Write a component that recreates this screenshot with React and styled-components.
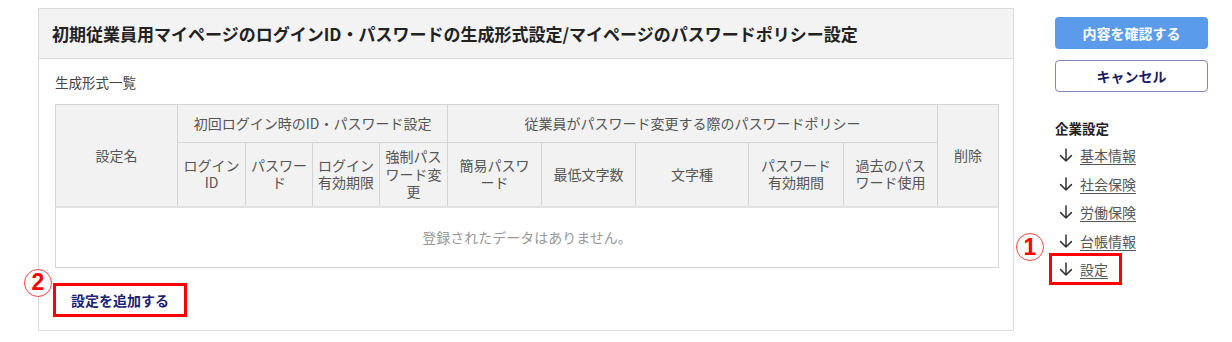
import styled, { createGlobalStyle } from "styled-components";

const GlobalStyle = createGlobalStyle`
  html, body {
    margin: 0;
    padding: 0;
    background: #fff;
  }
  body {
    font-family: "Noto Sans CJK JP", "Noto Sans", sans-serif;
    color: #333;
  }
`;

const policyCols = [
  { label: "簡易パスワード", width: 94 },
  { label: "最低文字数", width: 94 },
  { label: "文字種", width: 113 },
  { label: "パスワード\n有効期間", width: 95 },
  { label: "過去のパスワード使用", width: 94 },
];

const loginCols = [
  { label: "ログインID", width: 68 },
  { label: "パスワード", width: 67 },
  { label: "ログイン有効期限", width: 67 },
  { label: "強制パスワード変更", width: 68 },
];

const navLinks = ["基本情報", "社会保険", "労働保険", "台帳情報", "設定"];

export default function App() {
  return (
    <>
      <GlobalStyle />
      <Page>
        <Panel>
          <PanelHeader>
            <Title>
              初期従業員用マイページのログインID・パスワードの生成形式設定/マイページのパスワードポリシー設定
            </Title>
          </PanelHeader>
          <PanelBody>
            <SectionLabel>生成形式一覧</SectionLabel>
            <Table>
              <colgroup>
                <col style={{ width: 122 }} />
                {loginCols.map((c) => (
                  <col key={c.label} style={{ width: c.width }} />
                ))}
                {policyCols.map((c) => (
                  <col key={c.label} style={{ width: c.width }} />
                ))}
                <col style={{ width: 61 }} />
              </colgroup>
              <thead>
                <GroupRow>
                  <Th rowSpan={2}>設定名</Th>
                  <Th colSpan={4}>初回ログイン時のID・パスワード設定</Th>
                  <Th colSpan={5}>従業員がパスワード変更する際のパスワードポリシー</Th>
                  <Th rowSpan={2}>削除</Th>
                </GroupRow>
                <SubRow>
                  {loginCols.map((c) => (
                    <Th key={c.label}>{c.label}</Th>
                  ))}
                  {policyCols.map((c) => (
                    <Th key={c.label}>{c.label}</Th>
                  ))}
                </SubRow>
              </thead>
              <tbody>
                <tr>
                  <EmptyCell colSpan={11}>登録されたデータはありません。</EmptyCell>
                </tr>
              </tbody>
            </Table>
            <AddButton>
              <Marker $top={-17} $left={-32}>2</Marker>
              設定を追加する
            </AddButton>
          </PanelBody>
        </Panel>

        <Sidebar>
          <PrimaryButton>内容を確認する</PrimaryButton>
          <OutlineButton>キャンセル</OutlineButton>
          <NavHeading>企業設定</NavHeading>
          <NavList>
            {navLinks.map((label) => (
              <NavItem key={label} $marked={label === "設定"}>
                {label === "設定" && (
                  <Marker $top={-22} $left={-39}>1</Marker>
                )}
                <ArrowIcon />
                <NavLink>{label}</NavLink>
              </NavItem>
            ))}
          </NavList>
        </Sidebar>
      </Page>
    </>
  );
}

function ArrowIcon() {
  return (
    <svg width="14" height="14" viewBox="0 0 14 14" fill="none">
      <path
        d="M7 1v12M1.6 7.6 7 13l5.4-5.4"
        stroke="#333"
        strokeWidth="1.5"
        strokeLinecap="round"
        strokeLinejoin="round"
      />
    </svg>
  );
}

const Page = styled.div`
  display: flex;
  align-items: flex-start;
  padding: 8px 24px 0 38px;
`;

const Panel = styled.section`
  width: 976px;
  box-sizing: border-box;
  border: 1px solid #dcdcdc;
  background: #fff;
`;

const PanelHeader = styled.div`
  height: 49px;
  display: flex;
  align-items: center;
  padding-left: 13px;
  background: #f3f3f3;
  border-bottom: 1px solid #dcdcdc;
`;

const Title = styled.h1`
  margin: 0;
  font-size: 17px;
  font-weight: 700;
  color: #222;
  white-space: nowrap;
`;

const PanelBody = styled.div`
  padding: 13px 15px 13px 16px;
`;

const SectionLabel = styled.div`
  font-size: 13.5px;
  line-height: 20px;
  color: #444;
  margin-bottom: 12px;
`;

const Table = styled.table`
  width: 943px;
  table-layout: fixed;
  border-collapse: collapse;
  border: 1px solid #d8d8d8;
`;

const GroupRow = styled.tr`
  height: 38px;
`;

const SubRow = styled.tr`
  height: 64px;
`;

const Th = styled.th`
  background: #f2f2f2;
  border: 1px solid #d4d4d4;
  padding: 4px 5px;
  font-size: 14px;
  font-weight: 400;
  line-height: 17.5px;
  color: #555;
  text-align: center;
  vertical-align: middle;
  word-break: break-all;
  white-space: pre-line;
`;

const EmptyCell = styled.td`
  height: 59px;
  padding: 0;
  text-align: center;
  font-size: 14px;
  color: #999;
  border-top: 2px solid #e2e2e2;
`;

const AddButton = styled.button`
  position: relative;
  display: flex;
  align-items: center;
  margin: 15px 0 0 -2px;
  height: 34px;
  padding: 0 15px;
  box-sizing: border-box;
  border: 3px solid #f00;
  background: #fff;
  font-family: inherit;
  font-size: 14px;
  font-weight: 700;
  color: #1c2370;
  cursor: pointer;
`;

const Marker = styled.span`
  position: absolute;
  top: ${(p) => p.$top}px;
  left: ${(p) => p.$left}px;
  width: 28px;
  height: 28px;
  box-sizing: border-box;
  border: 1px solid #f44;
  border-radius: 50%;
  display: flex;
  align-items: center;
  justify-content: center;
  font-family: "Liberation Sans", Arial, sans-serif;
  font-size: 23px;
  font-weight: 700;
  color: #f00;
  background: #fff;
`;

const Sidebar = styled.aside`
  width: 153px;
  margin: 9px 0 0 41px;
  display: flex;
  flex-direction: column;
`;

const PrimaryButton = styled.button`
  height: 32px;
  border: none;
  border-radius: 4px;
  background: #5b9bec;
  color: #fff;
  font-family: inherit;
  font-size: 14px;
  font-weight: 700;
  cursor: pointer;
`;

const OutlineButton = styled.button`
  height: 32px;
  margin-top: 11px;
  border: 1px solid #8585bd;
  border-radius: 4px;
  background: #fff;
  color: #1a1d5e;
  font-family: inherit;
  font-size: 14px;
  font-weight: 700;
  cursor: pointer;
`;

const NavHeading = styled.div`
  margin-top: 23px;
  line-height: 26px;
  font-size: 13.5px;
  font-weight: 700;
  color: #222;
`;

const NavList = styled.ul`
  list-style: none;
  margin: 0;
  padding: 0;
`;

const NavItem = styled.li`
  position: relative;
  display: flex;
  align-items: center;
  gap: 7px;
  width: fit-content;
  height: 28.5px;
  padding-left: 4px;

  ${(p) =>
    p.$marked &&
    `
    &::after {
      content: "";
      position: absolute;
      left: -6px;
      right: -14px;
      top: -2px;
      bottom: -1px;
      border: 3px solid #f00;
      pointer-events: none;
    }
  `}
`;

const NavLink = styled.a`
  font-size: 14px;
  color: #555;
  text-decoration: underline;
  text-underline-offset: 3px;
  cursor: pointer;
`;
